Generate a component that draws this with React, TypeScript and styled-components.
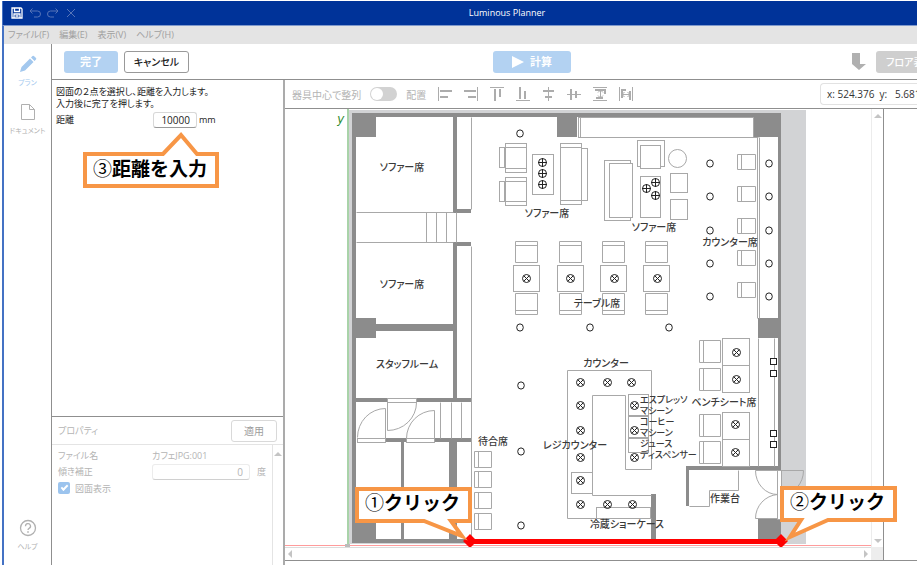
import React from "react";
import styled, { createGlobalStyle, css } from "styled-components";

const line = "#8f8f8f";
const wall = "#8c8c8c";
const faint = "#b4b4b4";
const paleBlue = "#b3d2f2";
const orange = "#f79646";

const GlobalStyle = createGlobalStyle`
  *, *::before, *::after { box-sizing: border-box; }
  body {
    margin: 0;
    background: #fff;
    color: #222;
    font-family: "Open Sans", "Noto Sans CJK JP", sans-serif;
    font-size: 9px;
    font-feature-settings: "palt";
  }
  button, input { font: inherit; font-feature-settings: inherit; color: inherit; margin: 0; padding: 0; }
  svg { display: block; }
`;

const Window = styled.div`
  display: flex;
  flex-direction: column;
  height: 100vh;
  padding: 1px 4px 0 2px;
  overflow: hidden;
`;

const TitleBar = styled.header`
  display: flex;
  align-items: center;
  height: 25px;
  flex: none;
  padding-left: 8px;
  background: #003399;
  border-left: 1px solid #4472c4;
  border-bottom: 1px solid #7f99cc;
  color: #fff;
`;

const QuickTools = styled.div`
  display: flex;
  gap: 6px;
`;

const QuickButton = styled.button<{ $dim?: boolean }>`
  display: grid;
  place-items: center;
  width: 12px;
  height: 12px;
  border: 0;
  background: none;
  color: ${(p) => (p.$dim ? "#5674b8" : "#fff")};
`;

const Title = styled.h1`
  flex: 1;
  margin: 0;
  padding-left: 20px;
  font-size: 9px;
  line-height: 14px;
  font-weight: 500;
  text-align: center;
`;

const Body = styled.div`
  display: flex;
  flex-direction: column;
  flex: 1;
  min-height: 0;
  border-left: 2px solid #4472c4;
`;

const MenuBar = styled.nav`
  display: flex;
  align-items: center;
  gap: 10px;
  height: 18px;
  flex: none;
  padding-left: 4px;
  background: #e4e4e4;
`;

const MenuItem = styled.button`
  border: 0;
  background: none;
  color: #a0a0a0;
  font-size: 9px;
  line-height: 16px;
`;

const Columns = styled.div`
  display: flex;
  flex: 1;
  min-height: 0;
`;

const Rail = styled.nav`
  display: flex;
  flex-direction: column;
  align-items: center;
  gap: 14px;
  width: 48px;
  flex: none;
  padding: 11px 0 12px;
  border-right: 1px solid ${line};
`;

const RailButton = styled.button<{ $active?: boolean; $last?: boolean }>`
  display: flex;
  flex-direction: column;
  align-items: center;
  gap: 4px;
  border: 0;
  background: none;
  color: ${(p) => (p.$active ? "#a3c8ee" : "#b0b0b0")};
  font-size: 7px;
  line-height: 12px;
  white-space: nowrap;
  ${(p) => p.$last && css`margin-top: auto;`}
`;

const Main = styled.div`
  display: flex;
  flex-direction: column;
  flex: 1;
  min-width: 0;
`;

const CommandBar = styled.div`
  display: flex;
  align-items: center;
  height: 36px;
  flex: none;
  padding-left: 12px;
  border-bottom: 1px solid ${line};
  overflow: hidden;
`;

const CommandButton = styled.button<{ $kind: "primary" | "outline" | "muted"; $width: number }>`
  display: flex;
  align-items: center;
  justify-content: center;
  gap: 6px;
  width: ${(p) => p.$width}px;
  height: 22px;
  flex: none;
  border: 0;
  border-radius: 3px;
  background: ${(p) => (p.$kind === "primary" ? paleBlue : p.$kind === "muted" ? "#cfcfcf" : "#fff")};
  color: ${(p) => (p.$kind === "outline" ? "#222" : "#fff")};
  font-size: ${(p) => (p.$kind === "primary" ? 11 : 10)}px;
  line-height: 16px;
  font-weight: 700;
  white-space: nowrap;
  ${(p) => p.$kind === "outline" && css`
    margin-left: 6px;
    border: 1px solid #999;
    font-weight: 500;
  `}
  ${(p) => p.$kind === "muted" && css`
    justify-content: flex-start;
    margin-right: -30px;
    padding-left: 10px;
    font-weight: 500;
  `}
`;

const CommandCentre = styled.div`
  display: flex;
  flex: 1;
  justify-content: center;
  padding-left: 24px;
`;

const DropArrow = styled.svg`
  flex: none;
  margin-right: 10px;
`;

const Work = styled.div`
  display: flex;
  flex: 1;
  min-height: 0;
`;

const SidePanel = styled.aside`
  position: relative;
  display: flex;
  flex-direction: column;
  width: 233px;
  flex: none;
  border-right: 2px solid #ababab;
`;

const Guide = styled.form`
  flex: 1;
  padding: 6px 4px;
`;

const GuideText = styled.p`
  margin: 0;
  line-height: 12px;
`;

const DistanceRow = styled.div`
  display: flex;
  align-items: center;
  gap: 2px;
  margin-top: 2px;
  line-height: 16px;
`;

const DistanceLabel = styled.label`
  width: 95px;
`;

const NumberInput = styled.input<{ $wide?: boolean }>`
  width: ${(p) => (p.$wide ? 98 : 44)}px;
  height: 16px;
  padding-right: 6px;
  border: 1px solid ${(p) => (p.$wide ? "#ececec" : "#d8d8d8")};
  border-bottom-color: ${(p) => (p.$wide ? "#d0d0d0" : "#999")};
  border-radius: 3px;
  background: #fff;
  font-size: 10px;
  text-align: right;
`;

const Properties = styled.section`
  display: flex;
  flex-direction: column;
  height: 149px;
  border-top: 1px solid ${line};
  color: ${faint};
`;

const PropertyHeader = styled.div`
  display: flex;
  align-items: center;
  justify-content: space-between;
  height: 28px;
  flex: none;
  padding: 0 6px;
  border-bottom: 1px solid #e4e4e4;
`;

const PropertyTitle = styled.h2`
  margin: 0;
  font-size: 9px;
  font-weight: 400;
`;

const ApplyButton = styled.button`
  width: 46px;
  height: 22px;
  border: 1px solid #d9d9d9;
  border-radius: 3px;
  background: #fff;
  color: #9c9c9c;
  font-size: 10px;
`;

const PropertyBody = styled.div`
  display: flex;
  flex: 1;
`;

const PropertyList = styled.div`
  flex: 1;
  padding: 3px 6px;
`;

const PropertyRow = styled.div`
  display: grid;
  grid-template-columns: 94px 98px auto;
  align-items: center;
  height: 16px;
  line-height: 16px;
`;

const Unit = styled.span`
  padding-left: 7px;
`;

const CheckLabel = styled.label`
  display: flex;
  align-items: center;
  gap: 5px;
  height: 16px;
`;

const CheckBox = styled.input`
  appearance: none;
  width: 12px;
  height: 12px;
  border-radius: 2px;
  background: #9cc4ee;
  display: grid;
  place-items: center;
  &:checked::before {
    content: "";
    width: 7px;
    height: 4px;
    margin-top: -2px;
    border: solid #fff;
    border-width: 0 0 2px 2px;
    rotate: -45deg;
  }
`;

const PropertyScroll = styled.div`
  display: flex;
  justify-content: center;
  width: 12px;
  padding-top: 5px;
  border-left: 1px solid #e4e4e4;
`;

const Workspace = styled.main`
  position: relative;
  display: flex;
  flex-direction: column;
  flex: 1;
  min-width: 0;
  padding-bottom: 4px;
`;

const AlignBar = styled.div`
  display: flex;
  align-items: center;
  height: 29px;
  flex: none;
  padding-left: 7px;
  border-bottom: 1px solid ${line};
  color: ${faint};
  font-size: 10px;
  white-space: nowrap;
  overflow: hidden;
`;

const SwitchLabel = styled.label`
  display: flex;
  align-items: center;
  gap: 9px;
`;

const SwitchInput = styled.input`
  appearance: none;
  width: 27px;
  height: 14px;
  border-radius: 7px;
  background: #d2d2d2;
  &::before {
    content: "";
    display: block;
    width: 12px;
    height: 12px;
    margin: 1px;
    border-radius: 50%;
    background: #fff;
  }
`;

const AlignTitle = styled.span`
  margin: 0 11px 0 9px;
`;

const AlignTools = styled.div`
  display: flex;
  flex: 1;
  gap: 10px;
`;

const AlignButton = styled.button`
  width: 16px;
  height: 16px;
  flex: none;
  border: 0;
  background: none;
  color: #acacac;
`;

const Position = styled.output`
  width: 97px;
  height: 22px;
  flex: none;
  padding-left: 6px;
  border: 1px solid #e2e2e2;
  border-right: 0;
  border-radius: 4px 0 0 4px;
  color: #333;
  line-height: 20px;
  white-space: pre;
  overflow: hidden;
`;

const Stage = styled.div`
  flex: 1;
  min-height: 0;
  padding-right: 33px;
  border-bottom: 1px solid ${line};
`;

const StageFrame = styled.div`
  display: grid;
  grid-template: minmax(0, 1fr) 13px / minmax(0, 1fr) 12px;
  height: 100%;
  border-right: 1px solid ${line};
`;

const Drawing = styled.div`
  overflow: hidden;
`;

const VScroll = styled.div`
  display: flex;
  flex-direction: column;
  justify-content: space-between;
  align-items: center;
  padding: 3px 0 2px;
  border-left: 1px solid #ececec;
`;

const HScroll = styled.div`
  display: flex;
  justify-content: space-between;
  align-items: center;
  padding: 0 1px;
  border-top: 1px solid #dcdcdc;
`;

const ScrollCorner = styled.div`
  background: #ededed;
`;

const CalloutBox = styled.div<{ $x: number; $y: number }>`
  position: absolute;
  left: ${(p) => p.$x}px;
  top: ${(p) => p.$y}px;
`;

const CalloutText = styled.p<{ $top: number }>`
  position: absolute;
  left: 10px;
  top: ${(p) => p.$top}px;
  margin: 0;
  color: #000;
  font-family: "Noto Sans CJK JP", sans-serif;
  font-feature-settings: normal;
  font-size: 19px;
  line-height: 28px;
  font-weight: 700;
  white-space: nowrap;
  span { font-weight: 400; }
`;

const PlanText = styled.text<{ $small?: boolean }>`
  fill: #3a3a3a;
  font-family: "Noto Sans CJK JP", sans-serif;
  font-size: ${(p) => (p.$small ? 9 : 10)}px;
  font-weight: 500;
`;

const AxisText = styled.text`
  fill: #2e8b2e;
  font-family: "Liberation Mono", monospace;
  font-style: italic;
  font-size: 12px;
`;

type CalloutProps = {
  x: number; y: number; width: number; height: number;
  points: string; textTop: number; mark: string; text: string;
};

function Callout({ x, y, width, height, points, textTop, mark, text }: CalloutProps) {
  return (
    <CalloutBox $x={x} $y={y}>
      <svg width={width} height={height} aria-hidden="true">
        <polygon points={points} fill="#fff" stroke={orange} strokeWidth="4" />
      </svg>
      <CalloutText $top={textTop}><span>{mark}</span>{text}</CalloutText>
    </CalloutBox>
  );
}

const arrowPaths = {
  up: "M0 6 4 2 8 6Z",
  down: "M0 2 4 6 8 2Z",
  left: "M6 0 2 4 6 8Z",
  right: "M2 0 6 4 2 8Z",
};

function Arrow({ to }: { to: keyof typeof arrowPaths }) {
  return (
    <svg width="8" height="8" viewBox="0 0 8 8" fill="#c4c4c4" aria-hidden="true">
      <path d={arrowPaths[to]} />
    </svg>
  );
}

const alignIcons: { name: string; thin: string; thick: string }[] = [
  { name: "左揃え", thin: "M1.5 1V15", thick: "M3 5H15M3 11H11" },
  { name: "右揃え", thin: "M14.5 1V15", thick: "M1 5H13M5 11H13" },
  { name: "上揃え", thin: "M1 1.5H15", thick: "M6 3V15M11 3V11" },
  { name: "下揃え", thin: "M1 14.5H15", thick: "M5 1V13M10 5V13" },
  { name: "左右中央", thin: "M7.5 1V15", thick: "M2 5H13M4 11H11" },
  { name: "上下中央", thin: "M0 8.5H14", thick: "M4 3V14M9 5V12" },
  { name: "縦に等間隔", thin: "M0 1.5H14M0 14.5H14M7.5 5V11M5 6.5 7.5 4 10 6.5M5 9.5 7.5 12 10 9.5", thick: "M2 4H12M3 12H10M12 3V8" },
  { name: "横に等間隔", thin: "M.5 1V15M13.5 1V15M3 8.5H11M5.5 6 3 8.5 5.5 11M8.5 6 11 8.5 8.500 11", thick: "M3 3V12M11 5V14M2 4H7" },
];

const wallRects = [
  [352, 113, 429, 4], [352, 113, 4, 430], [352, 113, 24, 24], [557, 113, 20, 24],
  [754, 113, 27, 24], [778, 113, 3, 357], [453, 117, 4, 96], [453, 209, 18, 4],
  [453, 242, 18, 4], [453, 242, 4, 156], [352, 318, 24, 20], [376, 324, 77, 7],
  [758, 318, 23, 20], [356, 398, 31, 4], [416, 398, 55, 4], [385, 438, 21, 4],
  [434, 438, 37, 4], [401, 442, 3, 98], [449, 442, 8, 98], [352, 519, 24, 24],
  [352, 539, 120, 4], [651, 494, 5, 45], [686, 466, 95, 4], [686, 466, 3, 40],
  [758, 519, 23, 20],
];

const outlineRects = [
  [505, 143, 21, 29], [499, 147, 5, 20], [505, 177, 21, 28], [499, 181, 5, 20],
  [532, 154, 21, 40], [560, 143, 21, 61], [581, 148, 6, 52],
  [637, 140, 27, 26], [640, 145, 20, 23], [604, 160, 26, 60], [609, 163, 23, 54],
  [640, 176, 20, 41], [670, 173, 17, 19], [670, 199, 17, 20],
  [578, 117, 175, 20],
  [571, 472, 21, 21], [596, 507, 54, 11],
  [628, 394, 20, 21], [628, 416, 20, 21], [628, 438, 20, 14],
  [722, 338, 27, 27], [722, 365, 27, 27], [722, 412, 27, 27], [722, 439, 27, 27],
  [387, 398, 29, 4], [357, 438, 28, 4], [406, 438, 28, 4], [777, 470, 4, 49],
];

const outlinePath = [
  "M505 147h21M505 168h21M505 181h21M505 201h21M560 147h21M560 200h21M580 117v20",
  "M356 212H453M356 242H453M426 212v30M436 212v30M446 212v30M456 212v30",
  "M471 117V209M471 246V539M753 137H758M757 137V318M759 137V318",
  "M385 408V438M385 408A28 29 0 0 0 357 437",
  "M387 402V430A29 28 0 0 0 416 402",
  "M434 410V438M434 410A28 28 0 0 0 406 438",
  "M440 402v36M451 402v36M461 402v36",
  "M567 370H651V469H625V395H592V495H651M567 370V518H651",
  "M689 506H709V490H738V470",
  "M758 338V466M774 338V466",
  "M755 470H777M755 470A22 24 0 0 0 777 494M777 494A24 24 0 0 0 755 518H777",
  "M781 470H803A22 24 0 0 1 781 494A24 24 0 0 1 803 519",
].join("");

const diningX = [526, 570, 613, 656];
const plainLamps = [
  [520, 133], [520, 327], [590, 327], [669, 327], [521, 385], [521, 451], [521, 525],
  ...[163, 196, 230, 263, 296].flatMap((y) => [[710, y], [769, y]]),
];
const plusLamps = [[542, 162], [542, 173], [542, 184], [655, 182], [646, 188], [655, 195]];
const crossLamps = [
  [526, 278], [570, 278], [614, 278], [657, 278],
  [580, 382], [607, 382], [631, 382], [580, 405], [580, 430], [580, 457], [580, 480],
  [580, 504], [607, 504], [632, 504], [634, 405], [634, 430], [634, 457],
  [736, 352], [736, 379], [735, 424], [735, 452],
];

const labels: [string, number, number][] = [
  ["ソファー席", 402, 171], ["ソファー席", 402, 288], ["ソファー席", 547, 217], ["ソファー席", 654, 231],
  ["カウンター席", 730, 246], ["テーブル席", 597, 307], ["スタッフルーム", 407, 368],
  ["待合席", 493, 445], ["レジカウンター", 575, 449], ["カウンター", 606, 367],
  ["ベンチシート席", 724, 406], ["作業台", 725, 502], ["冷蔵ショーケース", 627, 528],
];
const machineLabels: [string, number][] = [
  ["エスプレッソ", 403], ["マシーン", 414], ["コーヒー", 425], ["マシーン", 436], ["ジュース", 447], ["ディスペンサー", 458],
];

function FloorPlan() {
  return (
    <svg width="587" height="438" viewBox="285 109 587 438" role="img" aria-label="カフェ平面図">
      <rect x="349" y="110" width="457" height="434" fill="#d2d3d5" />
      <rect x="352" y="113" width="429" height="430" fill="#fff" />
      <path d="M284 545.5H872" stroke="#ff9c9c" />
      <path d="M348 109V546" stroke="#a9d3a9" strokeWidth="2" />
      <rect x="345" y="544" width="5" height="3" fill="#bbb" />
      <AxisText x="337" y="123">y</AxisText>

      <g fill={wall}>
        {wallRects.map(([x, y, w, h], i) => <rect key={i} x={x} y={y} width={w} height={h} />)}
      </g>

      <g fill="none" stroke="#a8a8a8" transform="translate(0.5 0.5)">
        {outlineRects.map(([x, y, w, h], i) => (
          <rect key={i} x={x} y={y} width={w} height={h} fill="#fff" />
        ))}
        <path d={outlinePath} />
        <circle cx="677" cy="158" r="9" />
        {diningX.map((x) => (
          <g key={x}>
            <rect x={x - 13} y="265" width="26" height="26" />
            <path d={`M${x - 11} 241h22v21h-22zM${x - 11} 245h22M${x - 11} 293h22v21h-22zM${x - 11} 310h22`} />
          </g>
        ))}
        {[154, 186, 218, 250, 282].map((y) => (
          <path key={y} d={`M737 ${y}h18v15h-18zM741 ${y}v15`} />
        ))}
        {[451, 471, 492, 513].map((y) => (
          <path key={y} d={`M474 ${y}h17v16h-17zM478 ${y}v16`} />
        ))}
        {[340, 368, 414, 441].map((y) => (
          <path key={y} d={`M699 ${y}h21v22h-21zM703 ${y}v22`} />
        ))}
      </g>

      <g fill="#fff" stroke="#222">
        {[[770, 358], [770, 370], [770, 430], [770, 441]].map(([x, y]) => (
          <rect key={y} x={x + 0.5} y={y + 0.5} width="6" height="6" />
        ))}
      </g>

      <g fill="none" stroke="#222">
        {plainLamps.map(([x, y]) => <ellipse key={`${x}-${y}`} cx={x} cy={y + 0.5} rx="3.3" ry="3.6" />)}
        {plusLamps.map(([x, y]) => (
          <g key={`${x}-${y}`}>
            <circle cx={x + 0.5} cy={y + 0.5} r="4" />
            <path d={`M${x - 4} ${y + 0.5}h9M${x + 0.5} ${y - 4}v9`} />
          </g>
        ))}
        {crossLamps.map(([x, y]) => (
          <g key={`${x}-${y}`}>
            <circle cx={x + 0.5} cy={y + 0.5} r="4" />
            <path d={`M${x - 2} ${y - 2}l5 5M${x + 3} ${y - 2}l-5 5`} />
          </g>
        ))}
      </g>

      {labels.map(([text, x, y]) => (
        <PlanText key={`${x}-${y}`} x={x} y={y} textAnchor="middle">{text}</PlanText>
      ))}
      {machineLabels.map(([text, y]) => <PlanText key={y} $small x="640" y={y}>{text}</PlanText>)}

      <path d="M470 541.5H781" stroke="#f00" strokeWidth="5" />
      <path d="M463 541l7-7 7 7-7 7zM774 541l7-7 7 7-7 7z" fill="#f00" />
    </svg>
  );
}

export default function App() {
  return (
    <Window>
      <GlobalStyle />
      <TitleBar>
        <QuickTools>
          <QuickButton aria-label="保存">
            <svg width="12" height="12" viewBox="0 0 12 12" fill="none" stroke="currentColor">
              <path d="M1 1h9l1 1v9H1zM3.500 1v3.500h5V1M3 11V7h6v4M4.500 9h3" strokeWidth="1.300" />
            </svg>
          </QuickButton>
          <QuickButton $dim aria-label="元に戻す">
            <svg width="12" height="12" viewBox="0 0 12 12" fill="none" stroke="currentColor">
              <path d="M3.500 1.500 1 4l2.500 2.500M1 4h7.500a2.500 2.500 0 0 1 0 6H5" />
            </svg>
          </QuickButton>
          <QuickButton $dim aria-label="やり直し">
            <svg width="12" height="12" viewBox="0 0 12 12" fill="none" stroke="currentColor">
              <path d="M8.500 1.500 11 4 8.500 6.500M11 4H3.500a2.500 2.500 0 0 0 0 6H7" />
            </svg>
          </QuickButton>
          <QuickButton $dim aria-label="削除">
            <svg width="12" height="12" viewBox="0 0 12 12" fill="none" stroke="currentColor">
              <path d="m2 2 8 8m0-8-8 8" />
            </svg>
          </QuickButton>
        </QuickTools>
        <Title>Luminous Planner</Title>
      </TitleBar>

      <Body>
        <MenuBar>
          {["ファイル(F)", "編集(E)", "表示(V)", "ヘルプ(H)"].map((m) => <MenuItem key={m}>{m}</MenuItem>)}
        </MenuBar>

        <Columns>
          <Rail>
            <RailButton $active>
              <svg width="18" height="18" viewBox="0 0 18 18" fill="currentColor">
                <path d="M1 17l1.500-5L11 3.500l3.500 3.500L6 15.500zM12 2.500l1.500-1.500q.7-.6 1.400 0l2.100 2.100q.6.7 0 1.400L15.500 6z" />
              </svg>
              プラン
            </RailButton>
            <RailButton>
              <svg width="16" height="18" viewBox="0 0 16 18" fill="none" stroke="currentColor">
                <path d="M1.500 1.500h8l5 5v10h-13zM9.500 1.500v5h5" />
              </svg>
              ドキュメント
            </RailButton>
            <RailButton $last>
              <svg width="18" height="18" viewBox="0 0 18 18" fill="none" stroke="currentColor">
                <circle cx="9" cy="9" r="7.500" strokeWidth="1.300" />
                <path d="M6.500 7.200a2.500 2.500 0 1 1 3.600 2.200Q9 10 9 11" strokeWidth="1.300" />
                <circle cx="9" cy="13" r=".5" />
              </svg>
              ヘルプ
            </RailButton>
          </Rail>

          <Main>
            <CommandBar>
              <CommandButton $kind="primary" $width={54}>完了</CommandButton>
              <CommandButton $kind="outline" $width={65}>キャンセル</CommandButton>
              <CommandCentre>
                <CommandButton $kind="primary" $width={78}>
                  <svg width="12" height="12" viewBox="0 0 12 12" fill="#fff"><path d="M0 0 12 6 0 12Z" /></svg>
                  計算
                </CommandButton>
              </CommandCentre>
              <DropArrow width="15" height="18" viewBox="0 0 15 18" fill="#b0b0b0" aria-hidden="true">
                <path d="M1 0h8v11h6l-7 6-7-6z" />
              </DropArrow>
              <CommandButton $kind="muted" $width={71}>フロア表示</CommandButton>
            </CommandBar>

            <Work>
              <SidePanel>
                <Guide>
                  <GuideText>図面の２点を選択し、距離を入力します。</GuideText>
                  <GuideText>入力後に完了を押します。</GuideText>
                  <DistanceRow>
                    <DistanceLabel htmlFor="distance">距離</DistanceLabel>
                    <NumberInput id="distance" defaultValue="10000" />
                    <span>mm</span>
                  </DistanceRow>
                </Guide>
                <Properties>
                  <PropertyHeader>
                    <PropertyTitle>プロパティ</PropertyTitle>
                    <ApplyButton>適用</ApplyButton>
                  </PropertyHeader>
                  <PropertyBody>
                    <PropertyList>
                      <PropertyRow>
                        <span>ファイル名</span>
                        <span>カフェJPG:001</span>
                      </PropertyRow>
                      <PropertyRow>
                        <label htmlFor="tilt">傾き補正</label>
                        <NumberInput $wide id="tilt" defaultValue="0" />
                        <Unit>度</Unit>
                      </PropertyRow>
                      <CheckLabel>
                        <CheckBox type="checkbox" defaultChecked />
                        図面表示
                      </CheckLabel>
                    </PropertyList>
                    <PropertyScroll><Arrow to="up" /></PropertyScroll>
                  </PropertyBody>
                </Properties>
                <Callout
                  x={31} y={50} width={138} height={60}
                  points="2,24 80,24 98,5 114,24 134,24 134,56 2,56"
                  textTop={24} mark="③" text="距離を入力"
                />
              </SidePanel>

              <Workspace>
                <AlignBar>
                  <SwitchLabel>
                    器具中心で整列
                    <SwitchInput type="checkbox" role="switch" />
                  </SwitchLabel>
                  <AlignTitle>配置</AlignTitle>
                  <AlignTools>
                    {alignIcons.map((icon) => (
                      <AlignButton key={icon.name} aria-label={icon.name}>
                        <svg width="16" height="16" viewBox="0 0 16 16" fill="none" stroke="currentColor">
                          <path d={icon.thin} />
                          <path d={icon.thick} strokeWidth="2" />
                        </svg>
                      </AlignButton>
                    ))}
                  </AlignTools>
                  <Position>{"x: 524.376  y:   5.681"}</Position>
                </AlignBar>
                <Stage>
                  <StageFrame>
                    <Drawing><FloorPlan /></Drawing>
                    <VScroll><Arrow to="up" /><Arrow to="down" /></VScroll>
                    <HScroll><Arrow to="left" /><Arrow to="right" /></HScroll>
                    <ScrollCorner />
                  </StageFrame>
                </Stage>
                <Callout
                  x={70} y={406} width={120} height={60}
                  points="2,3 115,3 115,35 96,35 107,50 69,35 2,35"
                  textTop={2} mark="①" text="クリック"
                />
                <Callout
                  x={495} y={405} width={120} height={60}
                  points="2,3 115,3 115,35 48,35 10,52 21,35 2,35"
                  textTop={2} mark="②" text="クリック"
                />
              </Workspace>
            </Work>
          </Main>
        </Columns>
      </Body>
    </Window>
  );
}
